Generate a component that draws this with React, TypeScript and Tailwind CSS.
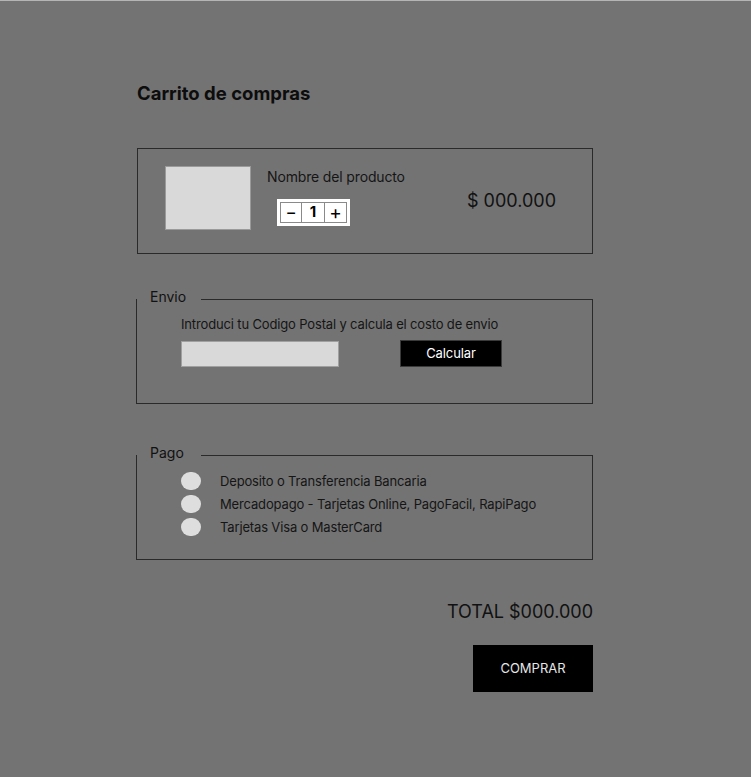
import { useState } from 'react';

const paymentOptions = [
  'Deposito o Transferencia Bancaria',
  'Mercadopago - Tarjetas Online, PagoFacil, RapiPago',
  'Tarjetas Visa o MasterCard',
];

export default function App() {
  const [qty, setQty] = useState(1);

  return (
    <div
      className="min-h-[777px] w-full bg-[#737373] border-t border-[#b5b5b5] text-[#111]"
      style={{ fontFamily: 'Inter, "Noto Sans", sans-serif' }}
    >
      <div className="pl-[136px] w-[593px] pt-[80px] pb-[85px] flex flex-col">
        <h1 className="pl-px text-[18.5px] leading-[24px] font-bold text-[#0d0d0d]">
          Carrito de compras
        </h1>

        {/* Producto */}
        <div className="mt-[43px] ml-px h-[106px] border border-[#2a2a2a] flex items-start">
          <div className="mt-[17px] ml-[27px] w-[86px] h-[64px] bg-[#d9d9d9] border border-[#9a9a9a]" />
          <div className="ml-[16px] mt-[19px] flex flex-col">
            <span className="text-[14px] leading-[18px] tracking-[-0.15px] text-[#151515]">Nombre del producto</span>
            <div className="mt-[13px] ml-[10px] w-[73px] h-[27px] bg-white p-[3px] flex">
              <button
                onClick={() => setQty(Math.max(1, qty - 1))}
                className="w-[22px] h-[21px] border border-[#8a8a8a] flex items-center justify-center text-[17px] leading-none text-black"
              >
                −
              </button>
              <span className="w-[22px] h-[21px] border-y border-[#8a8a8a] flex items-center justify-center text-[15px] font-bold text-black">
                {qty}
              </span>
              <button
                onClick={() => setQty(qty + 1)}
                className="w-[23px] h-[21px] border border-[#8a8a8a] flex items-center justify-center text-[19px] leading-none text-black"
              >
                +
              </button>
            </div>
          </div>
          <span className="ml-auto mr-[36px] mt-[40px] text-[18px] leading-[24px] text-[#111]">$ 000.000</span>
        </div>

        {/* Envio */}
        <fieldset className="mt-[33px] h-[117px] border border-[#2a2a2a]">
          <legend className="w-[64px] pl-[13px] pb-[4px] text-[14px] leading-[20px] text-[#111]">Envio</legend>
          <div className="pl-[44px] pt-[4px] flex flex-col">
            <span className="text-[13px] leading-[18px] tracking-[-0.15px] text-[#151515]">
              Introduci tu Codigo Postal y calcula el costo de envio
            </span>
            <div className="mt-[8px] flex items-start">
              <input className="w-[158px] h-[26px] bg-[#d9d9d9] border border-[#a0a0a0] outline-none" />
              <button className="ml-[61px] -mt-px w-[102px] h-[27px] bg-black border border-[#3a3a3a] text-white text-[13px] tracking-[-0.1px]">
                Calcular
              </button>
            </div>
          </div>
        </fieldset>

        {/* Pago */}
        <fieldset className="mt-[39px] h-[117px] border border-[#2a2a2a]">
          <legend className="w-[64px] pl-[13px] pb-[4px] text-[14px] leading-[20px] text-[#111]">Pago</legend>
          <div className="pl-[44px] pt-[5px] flex flex-col gap-[5px]">
            {paymentOptions.map((opt) => (
              <label key={opt} className="flex items-center h-[18px]">
                <span className="w-[20px] h-[18px] rounded-full bg-[#dedede]" />
                <span className="ml-[19px] text-[13px] leading-[18px] tracking-[-0.15px] text-[#151515]">{opt}</span>
              </label>
            ))}
          </div>
        </fieldset>

        <div className="mt-[40px] text-right text-[18px] leading-[24px] text-[#111]">TOTAL $000.000</div>

        <button className="self-end mt-[21px] w-[120px] h-[47px] bg-black text-[#e5e5e5] text-[13px]">
          COMPRAR
        </button>
      </div>
    </div>
  );
}
